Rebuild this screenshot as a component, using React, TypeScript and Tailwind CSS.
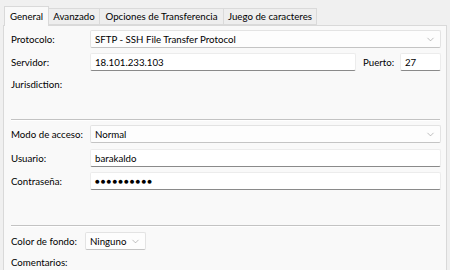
import { ChevronDown } from 'lucide-react'

function Select({ value, className }: { value: string; className: string }) {
  return (
    <div
      className={`flex items-center h-[18px] bg-[#fdfdfd] border border-[#e3e3e3] border-b-[#c4c4c4] rounded-[2px] pl-[4px] pr-[4px] ${className}`}
    >
      <span className="flex-1 whitespace-nowrap">{value}</span>
      <ChevronDown size={11} strokeWidth={1.1} className="text-[#808080] shrink-0" />
    </div>
  )
}

function Input({ value, className }: { value: string; className: string }) {
  return (
    <div
      className={`flex items-center h-[18px] bg-white border border-[#ececec] border-b-[#8a8a8a] rounded-[2px] pl-[4px] whitespace-nowrap ${className}`}
    >
      {value}
    </div>
  )
}

const tabs = [
  { label: 'General', w: 'w-[45px]' },
  { label: 'Avanzado', w: 'w-[51px]' },
  { label: 'Opciones de Transferencia', w: 'w-[124px]' },
  { label: 'Juego de caracteres', w: 'w-[93px]' },
]

export default function App() {
  return (
    <div className="w-[450px] h-[270px] bg-[#f0f0f0] overflow-hidden pl-[3px] pr-[3px] pt-[6px] text-[9.7px] text-[#000] flex flex-col font-['Lato',sans-serif]">
      {/* Tab strip */}
      <div className="flex items-end h-[20px] pl-[1px] relative z-10 whitespace-nowrap">
        {tabs.map((t, i) =>
          i === 0 ? (
            <div
              key={t.label}
              className={`${t.w} h-[20px] flex items-center justify-center bg-[#f9f9f9] border border-[#d9d9d9] border-b-0`}
            >
              {t.label}
            </div>
          ) : (
            <div
              key={t.label}
              className={`${t.w} h-[17px] flex items-center justify-center bg-[#eeeeee] border border-[#dadada] border-l-0 mb-px`}
            >
              {t.label}
            </div>
          )
        )}
      </div>

      {/* Panel */}
      <div className="flex-1 -mt-px bg-[#f9f9f9] border border-[#d9d9d9] border-b-0 pl-[7px] pr-[5px] pt-[4px] whitespace-nowrap">
        <div className="flex items-center">
          <span className="w-[79px] shrink-0">Protocolo:</span>
          <Select value="SFTP - SSH File Transfer Protocol" className="flex-1" />
        </div>
        <div className="flex items-center mt-[5px]">
          <span className="w-[79px] shrink-0">Servidor:</span>
          <Input value="18.101.233.103" className="w-[266px]" />
          <span className="ml-[7px] w-[37px] shrink-0">Puerto:</span>
          <Input value="27" className="flex-1" />
        </div>
        <div className="h-[26px] flex items-center">Jurisdiction:</div>

        <div className="mt-[22px] h-[2px] border-t border-[#c3c3c3] bg-white mr-[1px]" />

        <div className="flex items-center mt-[4px]">
          <span className="w-[79px] shrink-0">Modo de acceso:</span>
          <Select value="Normal" className="flex-1" />
        </div>
        <div className="flex items-center mt-[6px]">
          <span className="w-[79px] shrink-0">Usuario:</span>
          <Input value="barakaldo" className="flex-1" />
        </div>
        <div className="flex items-center mt-[5px]">
          <span className="w-[79px] shrink-0">Contraseña:</span>
          <Input value="●●●●●●●●●●" className="flex-1 text-[8px] tracking-[1px]" />
        </div>

        <div className="mt-[35px] h-[2px] border-t border-[#c3c3c3] bg-white mr-[1px]" />

        <div className="flex items-center mt-[5px]">
          <span className="w-[74px] shrink-0">Color de fondo:</span>
          <Select value="Ninguno" className="w-[61px]" />
        </div>
        <div className="h-[25px] flex items-center">Comentarios:</div>
      </div>
    </div>
  )
}
